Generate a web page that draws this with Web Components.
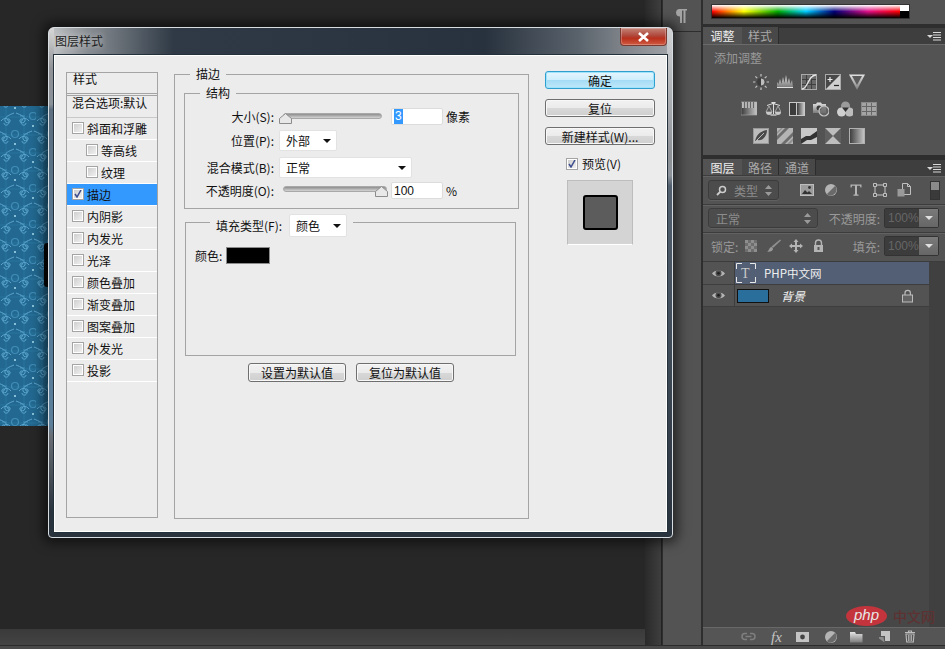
<!DOCTYPE html>
<html>
<head>
<meta charset="utf-8">
<style>
  html, body { margin: 0; padding: 0; background: #272727; overflow: hidden; }
  body { font-family: "Liberation Sans", "Noto Sans CJK SC", sans-serif; font-size: 12px; }
</style>
</head>
<body>
<ps-app></ps-app>
<script>
const CJK = `"Noto Sans CJK SC", "Liberation Sans", sans-serif`;

class PsBase extends HTMLElement {
  connectedCallback() {
    if (this.shadowRoot) return;
    this.attachShadow({ mode: 'open' });
    this.shadowRoot.innerHTML = `<style>${this.styles()}</style>${this.markup()}`;
  }
  styles() { return ':host{display:block}'; }
  markup() { return '<slot></slot>'; }
}

const grad = (id, a = '#e4e4e4', b = '#7c7c7c') =>
  `<defs><linearGradient id="${id}" x1="0" y1="0" x2="0" y2="1"><stop offset="0" stop-color="${a}"/><stop offset="1" stop-color="${b}"/></linearGradient>
   <linearGradient id="${id}h" x1="0" y1="0" x2="1" y2="0"><stop offset="0" stop-color="#3a3a3a"/><stop offset="1" stop-color="#c8c8c8"/></linearGradient></defs>`;

const ICONS = {
  sun: `<circle cx="8" cy="8" r="4" fill="#bdbdbd" stroke="#222" stroke-width=".6"/><path d="M8 4a4 4 0 0 0 0 8z" fill="#3d3d3d"/><path d="M8 0v2.400M8 13.600V16M0 8h2.400M13.600 8H16M2.400 2.400l1.800 1.800M11.800 11.800l1.800 1.800M2.400 13.600l1.800-1.800M11.800 4.200l1.800-1.800" stroke="#c4c4c4" stroke-width="1.200"/>`,
  levels: `<path d="M0 13V8l1.500 2L3 5l1.500 5L6 3l1.500 6L9 1l1.500 8L12 4l1.500 6L15 6l1 7z" fill="url(#g)"/><path d="M0 13.500h16" stroke="#e0e0e0"/>`,
  curves: `<rect x=".5" y=".5" width="15" height="15" fill="#6a6a6a" stroke="#aaa"/><path d="M5.500 1v14M10.500 1v14M1 5.500h14M1 10.500h14" stroke="#3f3f3f"/><path d="M1 15C7 15 7 1 15 1" fill="none" stroke="#e8e8e8" stroke-width="1.300"/>`,
  exposure: `<rect x=".5" y=".5" width="15" height="15" fill="#484848" stroke="#aaa"/><path d="M1 15 15 1v14z" fill="#cfcfcf"/><path d="M2.500 5.500h5M5 3v5" stroke="#eee" stroke-width="1.200"/><path d="M9 11.500h5" stroke="#222" stroke-width="1.200"/>`,
  vibrance: `<path d="M0 .5h16L8 16z" fill="url(#g)"/><path d="M3 2h10L8 11z" fill="#5b5b5b"/>`,
  hsl: `<rect y="1" width="16" height="13" fill="url(#gh)" stroke="#aaa" stroke-width=".6"/><path d="M1 1h14v6H1z" fill="#bcbcbc"/><path d="M3.500 1v6M6.500 1v6M9.500 1v6M12.500 1v6" stroke="#666" stroke-width="1.200"/>`,
  balance: `<path d="M8.500 1v12M2 4.500l6-2 7 2" stroke="#ddd" fill="none"/><path d="M6 1h5L8.500 4z" fill="#ddd"/><path d="M4 5 1 11h6zM13 5l-3 6h6z" fill="none" stroke="#bbb" stroke-width=".8"/><path d="M1 11h6a3 3 0 0 1-6 0zM10 11h6a3 3 0 0 1-6 0z" fill="#c9c9c9"/><path d="M5.500 14h6" stroke="#ccc" stroke-width="1.400"/>`,
  bw: `<rect y="1" width="16" height="14" fill="#c8c8c8"/><rect x="1" y="2" width="6" height="12" fill="#3c3c3c"/><rect x="8" y="2" width="7" height="12" fill="url(#gh)"/>`,
  photo: `<path d="M0 3h3l1-1.500h4l1 1.500h4v9H0z" fill="url(#g)"/><circle cx="6" cy="7" r="2.500" fill="#3a3a3a"/><circle cx="11" cy="10" r="5" fill="#6a6a6a" fill-opacity=".7" stroke="#c4c4c4" stroke-width="1.200"/>`,
  mixer: `<circle cx="8.500" cy="5" r="4.500" fill="#9b9b9b"/><circle cx="4.500" cy="11" r="4.500" fill="#d0d0d0"/><circle cx="12.500" cy="11" r="4.500" fill="#bdbdbd"/><path d="M5 6.500h7L8.500 11z" fill="#333"/>`,
  lookup: `<rect x=".5" y="1.500" width="15" height="13" fill="#a4a4a4" stroke="#8a8a8a"/><path d="M5.500 2v12M10.500 2v12M1 5.500h14M1 10.500h14" stroke="#666"/>`,
  invert: `<rect x=".5" y=".5" width="15" height="15" fill="#bcbcbc" stroke="#999"/><path d="M2 14C3 6 8 3 14 2 14 8 10 13 4 12z" fill="#4a4a4a"/><path d="M2 14 11 5" stroke="#bbb"/>`,
  poster: `<rect width="16" height="16" fill="#b4b4b4"/><path d="M0 8 8 0h4L0 12zM4 16 16 4v4l-8 8z" fill="#6d6d6d"/><path d="M0 4 4 0h2L0 6zM10 16l6-6v3l-3 3z" fill="#909090"/>`,
  threshold: `<rect width="16" height="16" fill="#c8c8c8"/><path d="M0 11 5 8h4l7-5v6l-6 3H6l-6 4z" fill="#333"/>`,
  selective: `<rect width="16" height="16" fill="#5f5f5f"/><path d="M0 0h16L8 8zM0 16h16L8 8z" fill="#bdbdbd"/><path d="M0 0l16 16M16 0 0 16" stroke="#888"/>`,
  gradmap: `<rect x=".5" y=".5" width="15" height="15" fill="url(#gh)" stroke="#b0b0b0"/>`,
  image: `<rect x=".5" y="1.500" width="13" height="11" fill="#9c9c9c" stroke="#bdbdbd"/><circle cx="9.500" cy="4.500" r="1.400" fill="#333"/><path d="M2 11l3-4 2.500 2.500L9 8l3 3z" fill="#333"/>`,
  halfcircle: `<circle cx="7" cy="7" r="6" fill="#b4b4b4"/><path d="M11.200 2.800a6 6 0 0 1-8.400 8.400z" fill="#6a6a6a"/>`,
  type: `<path d="M1.500 1.500h11v3h-1l-.6-1.700H8v8.400l1.600.5v1H4.400v-1l1.600-.5V2.800H3.100L2.500 4.500h-1z" fill="#b4b4b4"/>`,
  transform: `<rect x="2" y="2" width="10" height="10" fill="none" stroke="#b4b4b4" stroke-width="1.200"/><path d="M.5.500h3v3h-3zM10.500.500h3v3h-3zM.5 10.500h3v3h-3zM10.500 10.500h3v3h-3z" fill="#555" stroke="#c0c0c0"/>`,
  doc: `<path d="M5.500.500h5l3 3v8h-8z" fill="#555" stroke="#c0c0c0"/><path d="M10.500.500v3h3" fill="none" stroke="#c0c0c0"/><rect x=".5" y="6" width="7" height="7.500" fill="#9a9a9a"/>`,
  checker: `<rect width="12" height="12" fill="#6e6e6e"/><path d="M0 0h3v3H0zM6 0h3v3H6zM3 3h3v3H3zM9 3h3v3H9zM0 6h3v3H0zM6 6h3v3H6zM3 9h3v3H3zM9 9h3v3H9z" fill="#8e8e8e"/>`,
  brush: `<path d="M14 .500 15 1.500 7 9 5.500 7.500z" fill="#8f8f8f"/><path d="M5 8c1 0 2 1 2 2 0 2-3 3-6 2.500C3 12 3 9 5 8z" fill="#9a9a9a"/>`,
  move: `<path d="M7 0l2.500 3H8v3h3V4.500L14 7l-3 2.500V8H8v3h1.500L7 14l-2.500-3H6V8H3v1.500L0 7l3-2.500V6h3V3H4.500z" fill="#b4b4b4"/>`,
  padlock: `<path d="M2.500 6V4a3 3 0 0 1 6 0v2" fill="none" stroke="#b4b4b4" stroke-width="1.400"/><rect x="1" y="6" width="9" height="7" fill="#b4b4b4"/><rect x="4.500" y="8" width="2" height="3" fill="#555"/>`,
  padlockline: `<path d="M3 6V4a2.700 2.700 0 0 1 5.400 0v2" fill="none" stroke="#bcbcbc" stroke-width="1.200"/><rect x=".5" y="6" width="10" height="7" fill="#646464" stroke="#bcbcbc"/>`,
  link: `<path d="M6 2.500H4a3 3 0 0 0 0 6h2M9 2.500h2a3 3 0 0 1 0 6H9M4.500 5.500h6" fill="none" stroke="#7f7f7f" stroke-width="1.500"/>`,
  mask: `<rect y="1" width="13" height="10" fill="#c4c4c4"/><circle cx="6.500" cy="6" r="2.400" fill="#444"/>`,
  folder: `<path d="M0 1h5l1 2h6.500v8.500H0z" fill="url(#g)"/>`,
  newlayer: `<path d="M3 1h9v10H7V6H3z" fill="#c4c4c4"/><path d="M1 7h4.500l1 5.500-5.500-4z" fill="#8c8c8c"/>`,
  trash: `<path d="M1 2.500h10M4.500 2.500V1h3v1.500M2 4h8l-.7 8H2.700z" fill="none" stroke="#bcbcbc" stroke-width="1.100"/><path d="M4.500 5v6M6 5v6M7.500 5v6" stroke="#bcbcbc" stroke-width=".8"/>`,
  eye: `<path d="M0 5.500C2.500 1.500 10.500 1.500 13 5.500 10.500 9.500 2.500 9.500 0 5.500z" fill="#b4b4b4"/><circle cx="6.500" cy="5.200" r="3" fill="#4c4c4c"/><circle cx="6.500" cy="5.200" r="1.300" fill="#1e1e1e"/>`,
  menu: `<path d="M0 3h6L3 6z" fill="#d8d8d8"/><path d="M6 .500h8M6 3h8M6 5.500h8M6 8h8" stroke="#d8d8d8" stroke-width="1.200"/>`,
  pilcrow: `<path d="M5 1h8v1.500h-1.500V15H9.500V2.500H8V15H6V8.500A3.800 3.800 0 0 1 5 1z" fill="#a4a4a4"/>`
};

class PsIcon extends PsBase {
  styles() {
    const w = this.getAttribute('w') || 16;
    const h = this.getAttribute('h') || 16;
    return `:host{display:block;width:${w}px;height:${h}px;flex:none} svg{display:block}`;
  }
  markup() {
    const w = this.getAttribute('w') || 16;
    const h = this.getAttribute('h') || 16;
    return `<svg width="${w}" height="${h}" viewBox="0 0 ${w} ${h}">${grad('g')}${ICONS[this.getAttribute('name')] || ''}</svg>`;
  }
}

class PsCheck extends PsBase {
  styles() {
    return `:host{display:block;width:12px;height:12px;flex:none;box-sizing:border-box;border:1px solid #a4a4a4;background:#fff}
      div{margin:1px;width:8px;height:8px;background:linear-gradient(135deg,#cfcfcf,#f0f0f0)}
      svg{display:block}`;
  }
  markup() {
    const mark = this.hasAttribute('checked') ? '<svg width="8" height="8"><path d="M1 4l2 3 4-7" fill="none" stroke="#3c4c8c" stroke-width="1.500"/></svg>' : '';
    return `<div>${mark}</div>`;
  }
}

class PsStyleRow extends PsBase {
  styles() {
    return `:host{display:flex;align-items:center;height:20px;padding-bottom:1px;gap:3px;padding-left:${this.hasAttribute('sub') ? 19 : 5}px;
        border-bottom:1px solid #fff;font-family:${CJK};font-size:12px;color:#111;
        background:${this.hasAttribute('active') ? '#3399ff' : 'transparent'}}`;
  }
  markup() {
    return `<ps-check ${this.hasAttribute('checked') ? 'checked' : ''}></ps-check><slot></slot>`;
  }
}

class PsStyleList extends PsBase {
  styles() {
    return `:host{display:block;box-sizing:border-box;width:92px;height:446px;margin-top:6px;border:1px solid #a4a4a4;font-family:${CJK};font-size:12px;color:#111}
      .head{height:20px;line-height:12px;padding-left:6px;border-bottom:1px solid #a4a4a4}
      .blend{height:21px;margin-top:1px;border-top:1px solid #a4a4a4;border-bottom:1px solid #c8c8c8;line-height:14px;padding-left:5px;white-space:nowrap}`;
  }
  markup() {
    return `<div class="head">样式</div><div class="blend">混合选项:默认</div>
      <ps-style-row>斜面和浮雕</ps-style-row>
      <ps-style-row sub>等高线</ps-style-row>
      <ps-style-row sub>纹理</ps-style-row>
      <ps-style-row active checked>描边</ps-style-row>
      <ps-style-row>内阴影</ps-style-row>
      <ps-style-row>内发光</ps-style-row>
      <ps-style-row>光泽</ps-style-row>
      <ps-style-row>颜色叠加</ps-style-row>
      <ps-style-row>渐变叠加</ps-style-row>
      <ps-style-row>图案叠加</ps-style-row>
      <ps-style-row>外发光</ps-style-row>
      <ps-style-row>投影</ps-style-row>`;
  }
}

class PsButton extends PsBase {
  styles() {
    const primary = this.hasAttribute('primary');
    return `:host{display:flex;align-items:center;justify-content:center;box-sizing:border-box;height:${this.getAttribute('h') || 18}px;
        border:1px solid ${primary ? '#2f9fd0' : '#6f6f6f'};border-radius:3px;font-family:${CJK};font-size:12px;color:#111;white-space:nowrap;
        box-shadow:inset 0 0 0 1px ${primary ? '#9fe4fb' : '#f8f8f8'};
        background:${primary ? 'linear-gradient(#e6f6fe 0,#cdeefd 50%,#a5dcf5 52%,#bfe8fa 100%)' : 'linear-gradient(#f2f2f2 0,#ebebeb 50%,#d8d8d8 52%,#cfcfcf 100%)'}}`;
  }
}

class PsSelect extends PsBase {
  styles() {
    return `:host{display:flex;align-items:center;justify-content:space-between;box-sizing:border-box;flex:none;width:${this.getAttribute('w')}px;height:${this.getAttribute('h') || 21}px;
        padding:0 5px 0 6px;background:#fff;border:1px solid #e2e2e2;border-radius:2px;font-family:${CJK};font-size:12px;color:#111}
      i{width:0;height:0;border:4px solid transparent;border-top-color:#111;border-bottom:0}`;
  }
  markup() { return `<slot></slot><i></i>`; }
}

class PsSlider extends PsBase {
  styles() {
    const pct = +this.getAttribute('value');
    const len = +this.getAttribute('len');
    const pt = +this.getAttribute('pt') || 5;
    return `:host{display:block;position:relative;flex:none;box-sizing:border-box;width:109px;height:17px;padding:${pt}px 0 0 4px}
      .track{width:${len}px;height:4px;border:1px solid #a8a8a8;border-radius:3px;background:linear-gradient(#8e8e8e,#d4d4d4)}
      svg{position:absolute;left:${pct ? len - 6 : 0}px;top:${pt}px}`;
  }
  markup() {
    return `<div class="track"></div><svg width="13" height="11"><path d="M6.500 .5 12.500 5.500v5H.5v-5z" fill="#e8e8e8" stroke="#8c8c8c"/></svg>`;
  }
}

class PsInput extends PsBase {
  styles() {
    return `:host{display:flex;align-items:center;box-sizing:border-box;flex:none;width:52px;height:17px;padding-left:2px;background:#fff;border:1px solid #dcdcdc;border-radius:2px;
        font-family:"Liberation Sans",sans-serif;font-size:12px;color:#111}
      b{font-weight:normal;background:#3399ff;color:#fff;padding:0 1px;line-height:15px}`;
  }
  markup() {
    return this.hasAttribute('selected') ? `<b><slot></slot></b>` : `<slot></slot>`;
  }
}

class PsField extends PsBase {
  styles() {
    return `:host{display:flex;align-items:center;margin-top:${this.getAttribute('mt') || 0}px;font-family:${CJK};font-size:12px;color:#111}
      .label{width:89px;margin-right:5px;text-align:right;white-space:nowrap;flex:none}
      .rest{display:flex;align-items:center;gap:3px}`;
  }
  markup() {
    return `<div class="label">${this.getAttribute('label')}</div><div class="rest"><slot></slot></div>`;
  }
}

class PsDialog extends PsBase {
  styles() {
    return `:host{position:absolute;left:48px;top:27px;width:625px;height:511px;box-sizing:border-box;border-radius:6px 6px 4px 4px;
        border:1px solid #d8dde2;box-shadow:0 0 12px 5px rgba(0,0,0,.55);font-family:${CJK};font-size:12px;color:#111;
        background:
          linear-gradient(#d8d8d8 0,#8f9296 8%,#8a9198 15%,#5e6f80 16%,#577d9a 60%,#5d7f9a 78%,#6a6f75 80%,#29333e 95%) left/5px 100% no-repeat,
          linear-gradient(#d0d2d4 0,#8d9196 25%,#8c939a 29%,#53606f 31%,#29333e 100%) right/5px 100% no-repeat,
          linear-gradient(90deg,#c4c6c8 0,#8a8f94 6%,#2f3a46 20%,#28323e 70%,#5a636c 85%,#84888e 93%,#a0a4a8 100%) top/100% 27px no-repeat,
          #29333e}
      .title{display:flex;align-items:flex-start;height:26px;padding-left:6px;line-height:26px;color:#1c1c1c;text-shadow:0 0 6px rgba(255,255,255,.7)}
      .close{width:47px;height:18px;margin-left:auto;margin-right:5px;box-sizing:border-box;border:1px solid #7a3a30;border-top:0;border-radius:0 0 4px 4px;
        background:linear-gradient(#c48478 0,#b0483c 45%,#b8301c 60%,#d05a42 100%);display:flex;align-items:center;justify-content:center;box-shadow:inset 0 0 0 1px rgba(255,255,255,.25)}
      .body{display:grid;grid-template-columns:92px 355px 110px;column-gap:16px;align-items:start;box-sizing:border-box;height:477px;margin:1px 5px 0;padding:10px 0 0 11px;
        background:#ececec;border:1px solid #fff;outline:1px solid #24303a}
      fieldset{margin:0;border:1px solid #a4a4a4;padding:0;min-width:0}
      legend{font-family:${CJK};font-size:12px;line-height:16px;padding:0 6px}
      .outer{height:453px;padding:0 9px;box-sizing:border-box;width:355px}
      .outer>legend{margin-left:6px}
      .struct{height:124px;box-sizing:border-box;margin-top:3px;width:335px;padding:7px 0 0 0}
      .struct>legend{margin-left:15px}
      .fill{height:142px;box-sizing:border-box;margin:5px 0 0 1px;width:331px;padding:0 0 0 9px}
      .fill>legend{margin-left:15px;padding:0 6px 0 6px;height:16px}
      .fl{display:flex;align-items:flex-start;gap:7px;white-space:nowrap;line-height:23px}
      .color{display:flex;align-items:center;gap:4px;margin-top:17px}
      .swatch{width:44px;height:17px;box-sizing:border-box;background:#000;border:1px solid #8c8c8c}
      .defaults{display:flex;gap:10px;margin:7px 0 0 64px}
      .defaults ps-button{width:98px}
      .side{display:flex;flex-direction:column;margin-top:5px}
      .side ps-button+ps-button{margin-top:10px}
      .prev{display:flex;align-items:center;gap:4px;margin:10px 0 0 21px;white-space:nowrap}
      .preview{display:flex;align-items:center;justify-content:center;box-sizing:border-box;width:66px;height:65px;margin:8px 0 0 22px;background:#d4d4d4;border:1px solid #bdbdbd;border-bottom-color:#fff}
      .preview div{width:35px;height:35px;box-sizing:border-box;background:#5c5c5c;border:2px solid #000;border-radius:3px}`;
  }
  markup() {
    return `<div class="title">图层样式
        <div class="close"><svg width="11" height="10"><path d="M1 1l9 8M10 1 1 9" stroke="#fff" stroke-width="2.600"/></svg></div>
      </div>
      <div class="body">
        <ps-style-list></ps-style-list>
        <fieldset class="outer"><legend>描边</legend>
          <fieldset class="struct"><legend>结构</legend>
            <ps-field label="大小(S):"><ps-slider value="0" len="97" pt="5"></ps-slider><ps-input selected>3</ps-input><span>像素</span></ps-field>
            <ps-field label="位置(P):" mt="5"><ps-select w="58">外部</ps-select></ps-field>
            <ps-field label="混合模式(B):" mt="6"><ps-select w="133">正常</ps-select></ps-field>
            <ps-field label="不透明度(O):" mt="4"><ps-slider value="100" len="102" pt="4"></ps-slider><ps-input>100</ps-input><span>%</span></ps-field>
          </fieldset>
          <fieldset class="fill"><legend><div class="fl">填充类型(F):<ps-select w="58" h="23">颜色</ps-select></div></legend>
            <div class="color">颜色:<div class="swatch"></div></div>
          </fieldset>
          <div class="defaults"><ps-button h="19">设置为默认值</ps-button><ps-button h="19">复位为默认值</ps-button></div>
        </fieldset>
        <div class="side">
          <ps-button primary>确定</ps-button>
          <ps-button>复位</ps-button>
          <ps-button>新建样式(W)...</ps-button>
          <div class="prev"><ps-check checked></ps-check>预览(V)</div>
          <div class="preview"><div></div></div>
        </div>
      </div>`;
  }
}

class PsCanvas extends PsBase {
  styles() {
    return `:host{display:flex;flex-direction:column;width:645px;height:645px;flex:none;background:#272727}
      .doc{flex:1;padding-top:106px}
      .doc svg{display:block}
      .status{height:16px;background:linear-gradient(#3a3a3a,#444)}`;
  }
  markup() {
    return `<div class="doc"><svg width="100" height="320">
        <defs>
          <g id="m" fill="none" stroke="#5aa6cf" stroke-width="1">
            <circle r="1" fill="#a8dcef" stroke="none"/>
            <path d="M-1 5C-6 7-11 9-10 13-9 16-4 15-5 12-6 10-8 11-7.500 12.500M1 5C6 7 11 9 10 13 9 16 4 15 5 12 6 10 8 11 7.500 12.500"/>
            <path d="M-4-5c-3-4-8-3-8 1s5 4 5 1M4-5c3-4 8-3 8 1s-5 4-5 1"/>
          </g>
          <g id="r" fill="none" stroke="#3f8db8" stroke-width="1.200"><circle r="3.500"/><path d="M-8 0h-5M8 0h5"/></g>
          <pattern id="p" width="36" height="36" patternUnits="userSpaceOnUse">
            <rect width="36" height="36" fill="#226890"/>
            <path d="M0 11h36M0 29h36M6 0v36M24 0v36" stroke="#2b7aa6" stroke-width="2" opacity=".3"/>
            <use href="#r" x="15" y="28"/><use href="#r" x="33" y="10"/>
            <use href="#m" x="15" y="2"/><use href="#m" x="15" y="38"/>
            <use href="#m" x="33" y="20"/><use href="#m" x="-3" y="20"/>
          </pattern>
        </defs>
        <rect width="100" height="320" fill="url(#p)"/>
      </svg></div>
      <div class="status"></div>`;
  }
}

class PsTabs extends PsBase {
  styles() {
    return `:host{display:flex;height:${this.getAttribute('h') || 17}px;background:#3e3e3e;font-family:${CJK};font-size:12px;color:#a8a8a8;box-shadow:inset 0 1px #2e2e2e}
      .t{display:flex;align-items:center;justify-content:center;width:36px;border-right:1px solid #2c2c2c;background:#484848}
      .t.on{width:39px;border-right:0;background:#535353;color:#eee}
      ps-icon{margin:5px 4px 0 auto}`;
  }
  markup() {
    const tabs = this.getAttribute('tabs').split(',');
    return tabs.map((t, i) => `<div class="t ${i ? '' : 'on'}">${t}</div>`).join('') + `<ps-icon name="menu" w="14" h="9"></ps-icon>`;
  }
}

class PsAdjust extends PsBase {
  styles() {
    return `:host{display:block;height:111px;background:#535353;border-top:1px solid #6a6a6a;box-sizing:border-box;font-family:${CJK};font-size:12px;color:#999}
      .cap{padding:4px 0 0 11px;line-height:17px}
      .row{display:flex;justify-content:center;gap:8px;width:211px}
      .row+.row{margin-top:11px}
      .cap+.row{margin-top:8px}`;
  }
  markup() {
    const row = names => `<div class="row">${names.map(n => `<ps-icon name="${n}"></ps-icon>`).join('')}</div>`;
    return `<div class="cap">添加调整</div>` +
      row(['sun', 'levels', 'curves', 'exposure', 'vibrance']) +
      row(['hsl', 'balance', 'bw', 'photo', 'mixer', 'lookup']) +
      row(['invert', 'poster', 'threshold', 'selective', 'gradmap']);
  }
}

class PsOptRow extends PsBase {
  styles() {
    return `:host{display:flex;align-items:center;box-sizing:border-box;height:${this.getAttribute('h') || 28}px;padding:0 5px ${this.getAttribute('pb') || 0}px;border-top:1px solid #3c3c3c;box-shadow:inset 0 1px #626262;
        background:#535353;font-family:${CJK};font-size:12px;color:#999}`;
  }
}

class PsDarkSelect extends PsBase {
  styles() {
    return `:host{display:flex;align-items:center;box-sizing:border-box;flex:none;width:${this.getAttribute('w')}px;height:20px;padding:0 6px 0 7px;gap:7px;
        background:#4c4c4c;border:1px solid #3c3c3c;border-radius:3px;box-shadow:0 1px #606060;font-family:${CJK};font-size:12px;color:#8c8c8c}
      svg{margin-left:auto}`;
  }
  markup() {
    return `<slot></slot><svg width="7" height="11"><path d="M3.500 0 7 4H0zM3.500 11 0 7h7z" fill="#9a9a9a"/></svg>`;
  }
}

class PsPercent extends PsBase {
  styles() {
    return `:host{display:flex;box-sizing:border-box;flex:none;width:55px;height:20px;margin-right:1px;border:1px solid #333;border-radius:2px;font-family:"Liberation Sans",sans-serif;font-size:12px;color:#666}
      .v{flex:1;background:#3c3c3c;line-height:18px;padding-left:3px}
      .b{width:19px;background:linear-gradient(#7a7a7a,#666);display:flex;align-items:center;justify-content:center}
      i{width:0;height:0;border:4px solid transparent;border-top-color:#e0e0e0;border-bottom:0}`;
  }
  markup() { return `<div class="v"><slot></slot></div><div class="b"><i></i></div>`; }
}

class PsLayer extends PsBase {
  styles() {
    const on = this.hasAttribute('selected');
    return `:host{display:flex;align-items:stretch;box-sizing:border-box;height:${on ? 23 : 22}px;border-bottom:1px solid #3e3e3e;font-family:${CJK};font-size:${on ? 11.5 : 12}px}
      .eye{display:flex;align-items:center;justify-content:center;width:31px;border-right:1px solid #3e3e3e;background:#535353;flex:none}
      .main{position:relative;display:flex;align-items:center;flex:1;background:${on ? '#535f74' : '#535353'};color:#f0f0f0;padding-left:${on ? 29 : 2}px}`;
  }
  markup() {
    return `<div class="eye"><ps-icon name="eye" w="13" h="11"></ps-icon></div><div class="main"><slot></slot></div>`;
  }
}

class PsLayers extends PsBase {
  styles() {
    return `:host{display:block;flex:1;min-height:0;position:relative;background:#404040;border-top:1px solid #3c3c3c}
      .list{width:226px;height:100%;background:#474747}
      .thumb{width:30px;height:12px;background:#2a6f9c;border:1px solid #111;flex:none;margin-right:12px}
      i{font-family:${CJK};font-style:italic;white-space:nowrap}
      ps-icon{margin-left:auto;margin-right:16px}`;
  }
  markup() {
    return `<div class="list">
      <ps-layer selected>
        <svg style="position:absolute;left:1px;top:1px" width="20" height="20"><path d="M.5 6V.5H6M14 .5h5.500V6M.5 14v5.500H6M14 19.500h5.500V14" fill="none" stroke="#e8e8e8"/><text x="5" y="15" fill="#c8c8c8" font-family="Liberation Serif" font-size="14">T</text></svg>
        <span>PHP中文网</span>
      </ps-layer>
      <ps-layer><div class="thumb"></div><i>背景</i><ps-icon name="padlockline" w="11" h="14"></ps-icon></ps-layer>
    </div>`;
  }
}

class PsFooter extends PsBase {
  styles() {
    return `:host{display:flex;align-items:center;box-sizing:border-box;height:18px;flex:none;padding-left:38px;background:#555;border-top:1px solid #686868;box-shadow:0 -1px #3a3a3a}
      span{font-family:"Liberation Serif",serif;font-style:italic;font-size:15px;color:#c4c4c4;line-height:14px;width:22px;margin-left:15px}`;
  }
  markup() {
    return `<ps-icon name="link" w="15" h="11"></ps-icon><span>fx</span><ps-icon name="mask" w="13" h="12" style="margin-left:3px"></ps-icon>
      <ps-icon name="halfcircle" w="14" h="14" style="margin-left:15px"></ps-icon><ps-icon name="folder" w="13" h="12" style="margin-left:12px"></ps-icon>
      <ps-icon name="newlayer" w="13" h="13" style="margin-left:15px"></ps-icon><ps-icon name="trash" w="12" h="13" style="margin-left:13px"></ps-icon>`;
  }
}

class PsPanels extends PsBase {
  styles() {
    return `:host{display:flex;flex-direction:column;width:242px;height:645px;flex:none;background:#2e2e2e;font-family:${CJK};font-size:12px;color:#999}
      .color{height:25px;box-sizing:border-box;padding:4px 0 0 8px;background:#535353;border-bottom:1px solid #2e2e2e}
      .spectrum{display:flex;width:199px;height:15px;box-sizing:border-box;border:1px solid #333}
      .bar{flex:1;background:linear-gradient(#fff 0,rgba(255,255,255,0) 50%,rgba(0,0,0,0) 50%,#000 100%),linear-gradient(90deg,#f00 0,#ff0 17%,#0a0 35%,#0cf 50%,#007 65%,#e0108a 83%,#f00 100%)}
      .bw{width:9px;background:linear-gradient(#fff 50%,#000 50%)}
      .gap{height:2px}
      .gap2{height:4px}
      .lbl{margin-left:auto;margin-right:4px}
      .toggle{width:10px;height:19px;box-sizing:border-box;margin-left:auto;background:linear-gradient(#8a8a8a 50%,#3a3a3a 50%);border:1px solid #333}`;
  }
  markup() {
    return `<div class="color"><div class="spectrum"><div class="bar"></div><div class="bw"></div></div></div>
      <div class="gap"></div>
      <ps-tabs tabs="调整,样式"></ps-tabs>
      <ps-adjust></ps-adjust>
      <div class="gap2"></div>
      <ps-tabs tabs="图层,路径,通道" h="16"></ps-tabs>
      <ps-opt-row h="29">
        <ps-dark-select w="71"><svg width="11" height="11" style="margin-left:0"><circle cx="6.500" cy="4.500" r="3" fill="none" stroke="#ccc" stroke-width="1.500"/><path d="M4.500 6.500 1 10" stroke="#ccc" stroke-width="1.800"/></svg>类型</ps-dark-select>
        <ps-icon name="image" w="14" h="14" style="margin-left:21px"></ps-icon>
        <ps-icon name="halfcircle" w="14" h="14" style="margin-left:10px"></ps-icon>
        <ps-icon name="type" w="14" h="14" style="margin-left:11px"></ps-icon>
        <ps-icon name="transform" w="14" h="14" style="margin-left:10px"></ps-icon>
        <ps-icon name="doc" w="14" h="14" style="margin-left:10px"></ps-icon>
        <div class="toggle"></div>
      </ps-opt-row>
      <ps-opt-row pb="1">
        <ps-dark-select w="110">正常</ps-dark-select>
        <span class="lbl">不透明度:</span><ps-percent>100%</ps-percent>
      </ps-opt-row>
      <ps-opt-row h="29" pb="2">
        <span style="margin-left:3px">锁定:</span>
        <ps-icon name="checker" w="12" h="12" style="margin-left:7px"></ps-icon>
        <ps-icon name="brush" w="16" h="14" style="margin-left:9px"></ps-icon>
        <ps-icon name="move" w="14" h="14" style="margin-left:7px"></ps-icon>
        <ps-icon name="padlock" w="11" h="14" style="margin-left:10px"></ps-icon>
        <span class="lbl">填充:</span><ps-percent>100%</ps-percent>
      </ps-opt-row>
      <ps-layers></ps-layers>
      <ps-footer></ps-footer>`;
  }
}

class PsWatermark extends PsBase {
  styles() {
    return `:host{position:absolute;left:846px;top:606px;display:flex;align-items:center;gap:6px;font-family:${CJK};font-size:14px;font-weight:500;color:#5e3232}
      .logo{width:41px;height:20px;border-radius:50%;background:#c4343c;color:#e8e8e8;font:italic 15px/18px "Liberation Sans",sans-serif;text-align:center}`;
  }
  markup() { return `<div class="logo">php</div><div>中文网</div>`; }
}

class PsApp extends PsBase {
  styles() {
    return `:host{display:block;position:relative;width:945px;height:649px;overflow:hidden;background:#4a4a4a}
      .main{display:flex;height:645px}
      .strip{width:16px;flex:none;background:linear-gradient(90deg,#2a2a2a,#3e3e3e);border-right:1px solid #222}
      .mini{width:38px;flex:none;background:#535353;border-right:2px solid #2e2e2e;border-left:1px solid #2e2e2e}
      .mini .top{display:flex;align-items:center;justify-content:center;height:31px;border-bottom:1px solid #2e2e2e}
      .foot{height:4px;background:#4a4a4a;border-top:1px solid #2c2c2c;box-sizing:border-box}
      .grip{position:absolute;left:44px;top:243px;width:8px;height:44px;border-radius:3px;background:#050505}`;
  }
  markup() {
    return `<div class="main">
        <ps-canvas></ps-canvas>
        <div class="strip"></div>
        <div class="mini"><div class="top"><ps-icon name="pilcrow" w="16" h="16"></ps-icon></div></div>
        <ps-panels></ps-panels>
      </div>
      <div class="foot"></div>
      <div class="grip"></div>
      <ps-dialog></ps-dialog>
      <ps-watermark></ps-watermark>`;
  }
}

const els = { 'ps-icon': PsIcon, 'ps-check': PsCheck, 'ps-style-row': PsStyleRow, 'ps-style-list': PsStyleList, 'ps-button': PsButton,
  'ps-select': PsSelect, 'ps-slider': PsSlider, 'ps-input': PsInput, 'ps-field': PsField, 'ps-dialog': PsDialog, 'ps-canvas': PsCanvas,
  'ps-tabs': PsTabs, 'ps-adjust': PsAdjust, 'ps-opt-row': PsOptRow, 'ps-dark-select': PsDarkSelect, 'ps-percent': PsPercent,
  'ps-layer': PsLayer, 'ps-layers': PsLayers, 'ps-footer': PsFooter, 'ps-panels': PsPanels, 'ps-watermark': PsWatermark, 'ps-app': PsApp };
Object.keys(els).forEach(k => customElements.define(k, els[k]));
</script>
</body>
</html>
